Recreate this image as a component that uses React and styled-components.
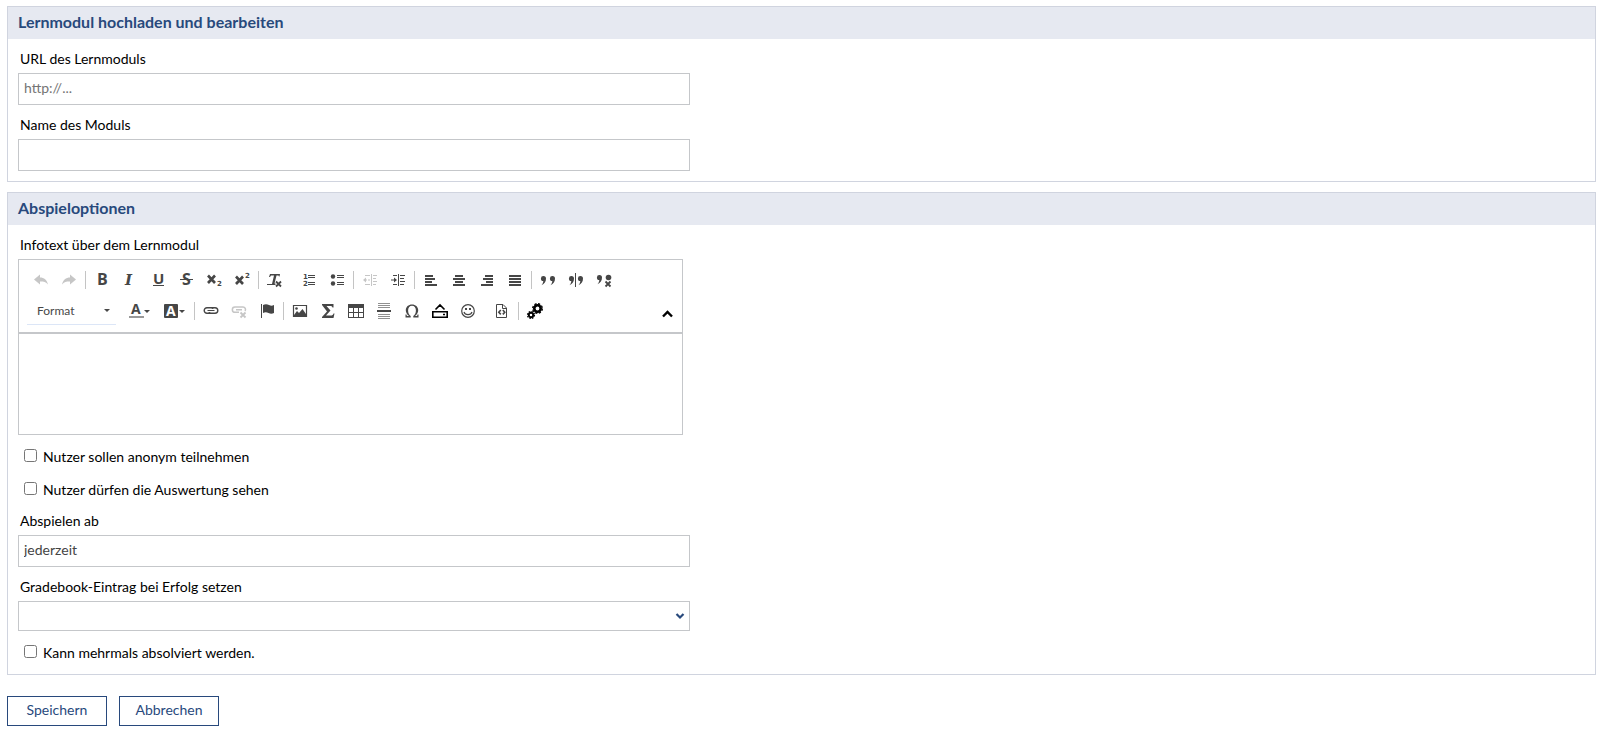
import React from "react";
import styled, { createGlobalStyle } from "styled-components";

const GlobalStyle = createGlobalStyle`
  *, *::before, *::after { box-sizing: border-box; }
  body {
    margin: 0;
    background: #fff;
    color: #000;
    font: 14px/20px Lato, "Liberation Sans", sans-serif;
  }
`;

const Form = styled.form`
  display: flex;
  flex-direction: column;
  gap: 10px;
  padding: 6px 8px 8px 7px;
`;

const Panel = styled.section`
  border: 1px solid #d0d4df;
`;

const PanelTitle = styled.h2`
  margin: 0;
  padding: 3px 10px 5px;
  background: #e6e9f1;
  color: #28497c;
  font-size: 16px;
  font-weight: 700;
  line-height: 24px;
`;

const PanelBody = styled.div`
  display: flex;
  flex-direction: column;
  gap: 10px;
  padding: 10px;
`;

const Field = styled.div`
  display: flex;
  flex-direction: column;
  gap: 4px;
  max-width: 672px;
`;

const Label = styled.label`
  align-self: flex-start;
  padding-left: 2px;
`;

const TextInput = styled.input`
  width: 100%;
  height: 32px;
  padding: 0 5px 4px;
  border: 1px solid #c5c7ca;
  border-radius: 0;
  background: #fff;
  color: #444;
  font: inherit;
  &::placeholder { color: #757575; opacity: 1; }
`;

const SelectBox = styled.div`
  display: grid;
  align-items: center;
  > * { grid-area: 1 / 1; }
  > svg { justify-self: end; margin-right: 5px; pointer-events: none; }
`;

const Select = styled.select`
  appearance: none;
  width: 100%;
  height: 30px;
  padding: 0 24px 0 5px;
  border: 1px solid #c5c7ca;
  border-radius: 0;
  background: #fff;
  color: #444;
  font: inherit;
`;

const CheckLabel = styled.label`
  display: flex;
  align-items: flex-start;
  align-self: flex-start;
  gap: 6px;
  height: 23px;
  padding: 0 0 0 6px;
  line-height: 24px;
`;

const Checkbox = styled.input`
  width: 13px;
  height: 13px;
  margin: 4px 0 0;
`;

const Editor = styled.div`
  max-width: 665px;
  border: 1px solid #c5c7ca;
`;

const Toolbar = styled.div`
  display: flex;
  padding: 5px 6px 6px 8px;
  border-bottom: 2px solid #c5c7ca;
`;

const ToolRows = styled.div`
  display: flex;
  flex: 1;
  flex-direction: column;
  gap: 1px;
`;

const ToolRow = styled.div`
  display: flex;
  align-items: center;
  height: 30px;
`;

const ToolButton = styled.button`
  display: flex;
  align-items: center;
  height: 26px;
  padding: 0 6px;
  margin: 0 ${(p) => (p.$last ? "6px" : "0")} 0 0;
  border: 0;
  background: none;
  color: ${(p) => (p.$black ? "#000" : "#464646")};
  opacity: ${(p) => (p.disabled ? 0.3 : 1)};
`;

const Separator = styled.span`
  width: 1px;
  height: 18px;
  margin: 0 2px;
  background: #c4c4c4;
`;

const FormatButton = styled.button`
  display: flex;
  align-items: center;
  justify-content: space-between;
  width: 89px;
  height: 28px;
  margin: 0 6px 0 0;
  padding: 0 5px 0 10px;
  border: 0;
  border-bottom: 1px solid #dce6f7;
  background: none;
  color: #484848;
  font: 12px/20px Lato, sans-serif;
`;

const Collapser = styled.button`
  display: flex;
  align-self: flex-end;
  padding: 0;
  margin: 0 3px 8px 0;
  border: 0;
  background: none;
  color: #000;
`;

const EditArea = styled.textarea`
  display: block;
  width: 100%;
  height: 100px;
  padding: 8px;
  border: 0;
  resize: none;
  outline: 0;
  font: inherit;
`;

const Actions = styled.div`
  display: flex;
  gap: 12px;
  padding-top: 11px;
`;

const ActionButton = styled.button`
  min-width: 100px;
  height: 30px;
  padding: 0 10px 2px;
  border: 1px solid #28497c;
  background: #fff;
  color: #28497c;
  font: inherit;
`;

const Drawing = styled.svg`
  display: block;
  overflow: visible;
`;

const Svg = ({ w = 16, h = 16, children }) => (
  <Drawing width={w} height={h} viewBox={`0 0 ${w} ${h}`} fill="currentColor" aria-hidden="true">
    {children}
  </Drawing>
);

const Caret = () => (
  <Svg w={7} h={5}>
    <path d="M0 1h6L3 4z" />
  </Svg>
);

const line = { fill: "none", stroke: "currentColor" };
const sans = { fontFamily: "Open Sans, sans-serif", fontWeight: 700 };
const small = { fontFamily: "DejaVu Sans, sans-serif", fontSize: 7, fontWeight: 700 };
const QUOTE = "M3.500 3a2.500 2.500 0 1 0-.2 5c-.1 1.500-.7 2.800-1.800 4.200C4.500 11 6 8.500 6 5.500A2.500 2.500 0 0 0 3.500 3z";

const icons = {
  undo: <path d="M1 7.500 7 2.500V5.500C11 5.500 14 8 15 12.500 13 10 11 9.500 7 9.500V12.500z" />,
  redo: <path d="M15 7.500 9 2.500V5.500C5 5.500 2 8 1 12.500 3 10 5 9.500 9 9.500V12.500z" />,
  bold: <text x="3" y="13" fontSize="16" {...sans}>B</text>,
  italic: (
    <text x="3" y="13" fontSize="15" fontFamily="DejaVu Serif, serif" fontWeight="700" fontStyle="italic">I</text>
  ),
  underline: (
    <>
      <text x="3" y="12" fontSize="15" {...sans}>U</text>
      <path d="M3 13h11v1H3z" />
    </>
  ),
  strike: (
    <>
      <text x="4" y="13" fontSize="16" {...sans}>S</text>
      <path d="M2 7h13v1H2z" />
    </>
  ),
  sub: (
    <>
      <path {...line} strokeWidth="2.600" d="M2 3.500l7 7.500M9 3.500l-7 7.500" />
      <text x="11" y="14" {...small}>2</text>
    </>
  ),
  sup: (
    <>
      <path {...line} strokeWidth="2.600" d="M2 4.500l7 7.500M9 4.500l-7 7.500" />
      <text x="11" y="6" {...small}>2</text>
    </>
  ),
  clear: (
    <>
      <path d="M3 2h10l-.5 2.500H12L11.500 3.500H9.500L7.500 11.500H8.500V13H0V12H5L7 3.500H4L3 5H2z" />
      <path {...line} strokeWidth="1.800" d="m9 9.500 5 5m0-5-5 5" />
    </>
  ),
  numbered: (
    <>
      <path d="M7 3h7v1H7zM7 5h7v1H7zM7 10h7v1H7zM7 12h7v1H7z" />
      <text x="2" y="7" {...small}>1</text>
      <text x="2" y="14" {...small}>2</text>
    </>
  ),
  bullets: (
    <>
      <circle cx="4" cy="4.500" r="2.200" />
      <circle cx="4" cy="11.500" r="2.200" />
      <path d="M8 3h7v1H8zM8 5h7v1H8zM8 10h7v1H8zM8 12h7v1H8z" />
    </>
  ),
  outdent: (
    <>
      <path {...line} d="M9.500 2v12M11 3.500h4M11 6.500h3M11 9.500h4M11 12.500h3M3 3.500h5M3 12.500h5" />
      <path d="M1 8l3-2.500V7.500h1v1H4v2zM6 7.500h2v1H6z" />
    </>
  ),
  indent: (
    <>
      <path {...line} d="M8.500 2v12M10 3.500h5M10 6.500h4M10 9.500h5M10 12.500h4M3 3.500h4M3 12.500h4" />
      <path d="M7 8L4 5.500V7.500H1v1h3v2z" />
    </>
  ),
  left: <path d="M2 3h8v2H2zM2 6h10v2H2zM2 9h7v2H2zM2 12h12v2H2z" />,
  center: <path d="M4 3h8v2H4zM2 6h12v2H2zM4 9h8v2H4zM2 12h12v2H2z" />,
  right: <path d="M6 3h8v2H6zM4 6h10v2H4zM7 9h7v2H7zM2 12h12v2H2z" />,
  justify: <path d="M2 3h12v2H2zM2 6h12v2H2zM2 9h12v2H2zM2 12h12v2H2z" />,
  quote: (
    <>
      <path d={QUOTE} transform="translate(0 1)" />
      <path d={QUOTE} transform="translate(9 1)" />
    </>
  ),
  splitQuote: (
    <>
      <path d={QUOTE} transform="translate(0 1)" />
      <path d={QUOTE} transform="translate(9 1)" />
      <path d="M7 1h1v14H7z" />
    </>
  ),
  removeQuote: (
    <>
      <path d={QUOTE} />
      <circle cx="12.500" cy="5.500" r="2.800" />
      <path {...line} strokeWidth="1.800" d="m9.500 9.500 5 5m0-5-5 5" />
    </>
  ),
  link: (
    <>
      <path {...line} strokeWidth="1.400" d="M9 10.300H4A2.800 2.800 0 0 1 4 4.700h5.500M7 4.700h5a2.800 2.800 0 0 1 0 5.600H6.500" />
      <path {...line} strokeWidth="1.200" d="M4.500 7.500h7M8.500 4.700q1.500.5 1.500 1.300M7.500 10.300Q6 9.800 6 9" />
    </>
  ),
  unlink: (
    <>
      <path {...line} strokeWidth="1.500" d="M8 9.300H4A2.500 2.500 0 0 1 4 4h5M6 4h6a2.500 2.500 0 0 1 2 4M5 6.700h6" />
      <path {...line} strokeWidth="1.800" d="m9.500 9.500 5 5m0-5-5 5" />
    </>
  ),
  flag: <path d="M2 1h1v14H2zM4 2c2-1 4-1 6 0s3 1 5 0v8c-2 1-3.500 1-5.500 0S6 9 4 10z" />,
  image: (
    <>
      <path {...line} strokeWidth="1.200" d="M1.500 2.500h13v11h-13z" />
      <path d="M2 12l3-4 2 2 3.500-4L14 11v2H2z" />
      <circle cx="4.500" cy="5.500" r="1.300" />
    </>
  ),
  sigma: <path d="M2 1h11.500v3.500h-1C12 3 11.500 3 10 3H6.500l4 4.500L6 12.500h4.500c2 0 2.500-.5 3-2h1L13.500 15H2v-1l5-5.500L2 2z" />,
  table: (
    <path d="M0 1h16v14H0zM1 5v4h4V5zM6 5v4h4V5zM11 5v4h4V5zM1 10v4h4v-4zM6 10v4h4v-4zM11 10v4h4v-4z" fillRule="evenodd" />
  ),
  rule: (
    <>
      <path opacity=".6" d="M2 0h12v1H2zM2 2h12v1H2zM2 4h12v1H2zM2 11h12v1H2zM2 13h12v1H2zM2 15h12v1H2z" />
      <path d="M1 7h14v2H1z" />
    </>
  ),
  omega: (
    <path d="M1.500 14.500v-3h1c0 1 .5 1.500 1.500 1.500h1C2.800 11.500 1.800 9.500 1.800 7.300 1.800 3.800 4.500 1.500 8 1.500s6.200 2.300 6.200 5.800c0 2.200-1 4.200-3.200 5.700h1c1 0 1.500-.5 1.500-1.500h1v3H9.300v-1.500c1.700-1 2.600-3 2.600-5.700S10.300 2.700 8 2.700 4.100 4.600 4.100 7.300s.9 4.700 2.600 5.700v1.500z" />
  ),
  upload: <path {...line} strokeWidth="1.600" d="M.8 8.800h14.400v5.400H.8zM11 11.500h2M3.500 6.500 8 2l4.500 4.500" />,
  smiley: (
    <>
      <circle {...line} cx="8" cy="8" r="6.300" strokeWidth="1.200" />
      <path {...line} strokeWidth="1.200" d="M4 9c1 3.500 7 3.500 8 0" />
      <path d="M5 5h2v2H5zM9 5h2v2H9z" />
    </>
  ),
  source: (
    <>
      <path {...line} d="M2.500 1.500H9l3.500 3.500v9.500h-10zM8.500 2v3.500H12" />
      <path {...line} strokeWidth="1.600" d="M6.800 7 4.800 9.200l2 2.200M8.800 7l2 2.200-2 2.200" />
    </>
  ),
  gears: (
    <>
      <circle {...line} cx="10.500" cy="5.500" r="3.200" strokeWidth="2.600" />
      <circle {...line} cx="10.500" cy="5.500" r="4.800" strokeWidth="1.400" strokeDasharray="2.200 1.570" />
      <circle {...line} cx="4" cy="12" r="2.200" strokeWidth="1.900" />
      <circle {...line} cx="4" cy="12" r="3.500" strokeWidth="1.200" strokeDasharray="1.600 1.150" />
    </>
  ),
  textColor: (
    <>
      <text x="3" y="11" fontSize="14" {...sans}>A</text>
      <path d="M1 13h15v2H1z" fill="#999" />
    </>
  ),
  bgColor: (
    <>
      <rect x="1" y="1" width="14" height="14" rx="1" />
      <text x="3" y="13" fontSize="14" fill="#fff" {...sans}>A</text>
    </>
  ),
};

const SEP = "|";

const firstRow = [
  { icon: "undo", label: "Rückgängig", disabled: true },
  { icon: "redo", label: "Wiederherstellen", disabled: true },
  SEP,
  { icon: "bold", label: "Fett" },
  { icon: "italic", label: "Kursiv" },
  { icon: "underline", label: "Unterstrichen" },
  { icon: "strike", label: "Durchgestrichen" },
  { icon: "sub", label: "Tiefgestellt" },
  { icon: "sup", label: "Hochgestellt" },
  SEP,
  { icon: "clear", label: "Formatierung entfernen", last: true },
  { icon: "numbered", label: "Nummerierte Liste" },
  { icon: "bullets", label: "Liste" },
  SEP,
  { icon: "outdent", label: "Einzug verringern", disabled: true },
  { icon: "indent", label: "Einzug erhöhen" },
  SEP,
  { icon: "left", label: "Linksbündig" },
  { icon: "center", label: "Zentriert" },
  { icon: "right", label: "Rechtsbündig" },
  { icon: "justify", label: "Blocksatz" },
  SEP,
  { icon: "quote", label: "Zitat einfügen" },
  { icon: "splitQuote", label: "Zitat teilen" },
  { icon: "removeQuote", label: "Zitat entfernen" },
];

const secondRow = [
  { icon: "textColor", label: "Textfarbe", menu: true },
  { icon: "bgColor", label: "Hintergrundfarbe", menu: true },
  SEP,
  { icon: "link", label: "Link einfügen" },
  { icon: "unlink", label: "Link entfernen", disabled: true },
  { icon: "flag", label: "Anker einfügen" },
  SEP,
  { icon: "image", label: "Bild" },
  { icon: "sigma", label: "Formel" },
  { icon: "table", label: "Tabelle" },
  { icon: "rule", label: "Horizontale Linie" },
  { icon: "omega", label: "Sonderzeichen" },
  { icon: "upload", label: "Datei hochladen", black: true },
  { icon: "smiley", label: "Smiley", last: true },
  { icon: "source", label: "Quellcode" },
  SEP,
  { icon: "gears", label: "Einstellungen", black: true },
];

const Tools = ({ items }) =>
  items.map((item, i) =>
    item === SEP ? (
      <Separator key={i} />
    ) : (
      <ToolButton
        key={i}
        type="button"
        aria-label={item.label}
        disabled={item.disabled}
        $last={item.last}
        $black={item.black}
      >
        <Svg>{icons[item.icon]}</Svg>
        {item.menu && <Caret />}
      </ToolButton>
    )
  );

const Check = ({ children }) => (
  <CheckLabel>
    <Checkbox type="checkbox" />
    {children}
  </CheckLabel>
);

export default function App() {
  return (
    <>
      <GlobalStyle />
      <Form onSubmit={(e) => e.preventDefault()}>
        <Panel>
          <PanelTitle>Lernmodul hochladen und bearbeiten</PanelTitle>
          <PanelBody>
            <Field>
              <Label htmlFor="url">URL des Lernmoduls</Label>
              <TextInput id="url" type="text" placeholder="http://..." />
            </Field>
            <Field>
              <Label htmlFor="name">Name des Moduls</Label>
              <TextInput id="name" type="text" />
            </Field>
          </PanelBody>
        </Panel>

        <Panel>
          <PanelTitle>Abspieloptionen</PanelTitle>
          <PanelBody>
            <Field>
              <Label htmlFor="info">Infotext über dem Lernmodul</Label>
              <Editor>
                <Toolbar>
                  <ToolRows>
                    <ToolRow>
                      <Tools items={firstRow} />
                    </ToolRow>
                    <ToolRow>
                      <FormatButton type="button">
                        Format
                        <Caret />
                      </FormatButton>
                      <Tools items={secondRow} />
                    </ToolRow>
                  </ToolRows>
                  <Collapser type="button" aria-label="Werkzeugleiste einklappen">
                    <Svg w={11} h={8}>
                      <path {...line} strokeWidth="2.400" d="M1 6.500 5.500 2 10 6.500" />
                    </Svg>
                  </Collapser>
                </Toolbar>
                <EditArea id="info" />
              </Editor>
            </Field>
            <Check>Nutzer sollen anonym teilnehmen</Check>
            <Check>Nutzer dürfen die Auswertung sehen</Check>
            <Field>
              <Label htmlFor="start">Abspielen ab</Label>
              <TextInput id="start" type="text" defaultValue="jederzeit" />
            </Field>
            <Field>
              <Label htmlFor="gradebook">Gradebook-Eintrag bei Erfolg setzen</Label>
              <SelectBox>
                <Select id="gradebook">
                  <option value=""></option>
                </Select>
                <Svg w={10} h={8}>
                  <path {...line} stroke="#28497c" strokeWidth="2.200" d="M1.500 2 5 5.500 8.500 2" />
                </Svg>
              </SelectBox>
            </Field>
            <Check>Kann mehrmals absolviert werden.</Check>
          </PanelBody>
        </Panel>

        <Actions>
          <ActionButton type="submit">Speichern</ActionButton>
          <ActionButton type="button">Abbrechen</ActionButton>
        </Actions>
      </Form>
    </>
  );
}
